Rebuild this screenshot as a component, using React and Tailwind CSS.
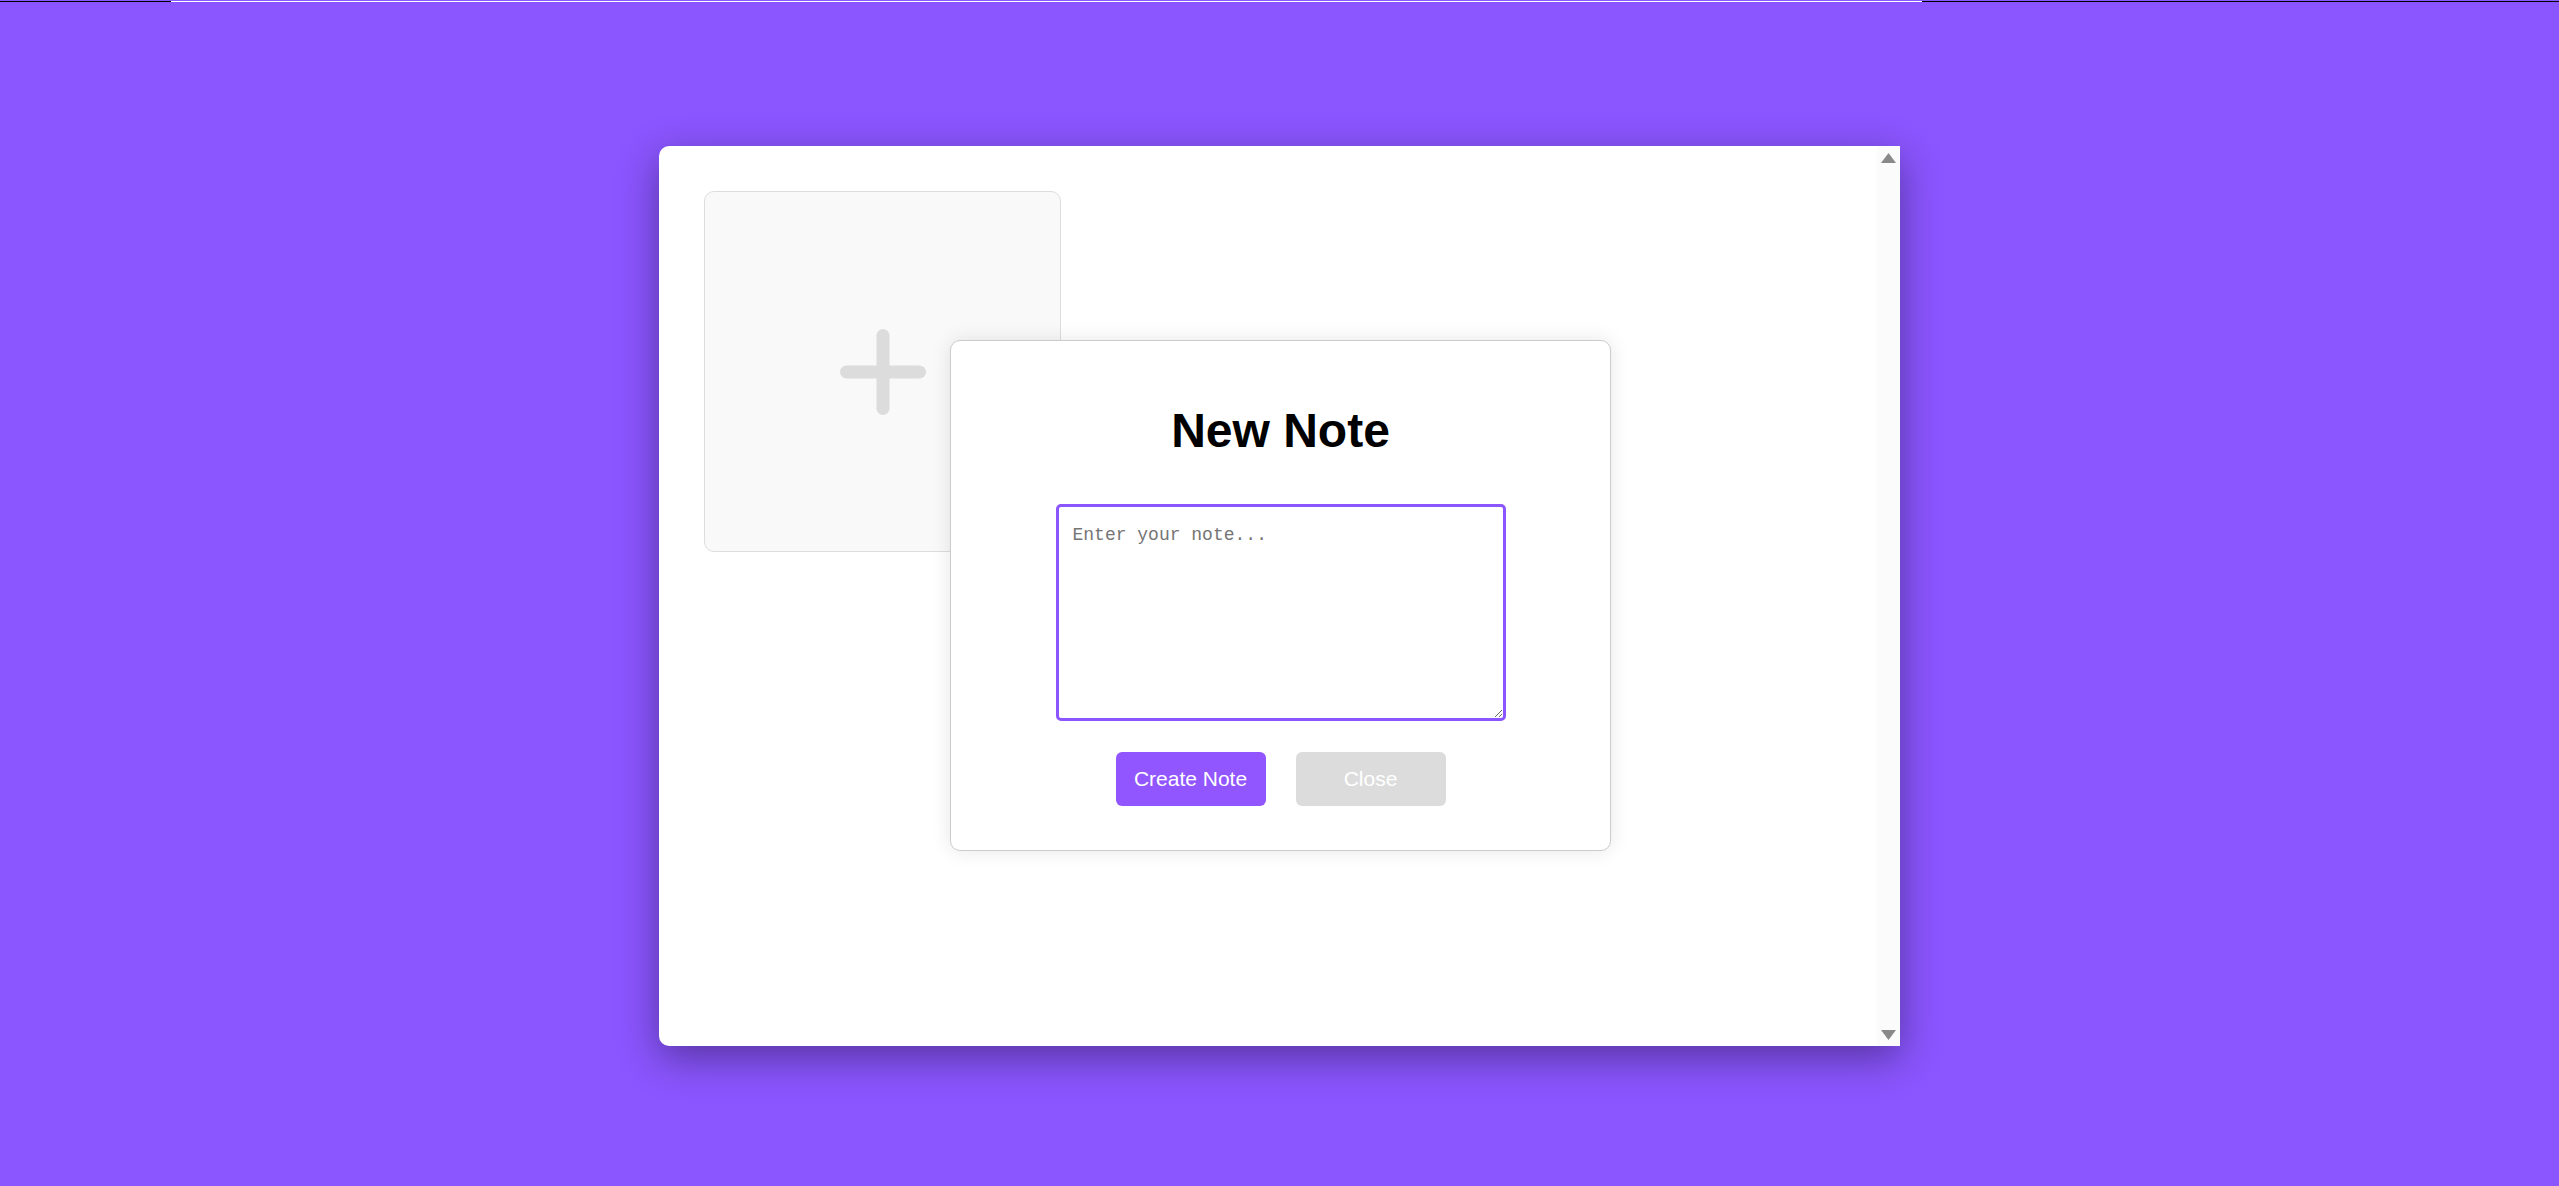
import React from "react";

// Notes board: one "add" tile, with the New Note dialog open over it.

const Plus = () => (
  <svg width="86" height="86" viewBox="0 0 86 86" fill="none">
    <line x1="6.5" y1="43" x2="79.5" y2="43" stroke="#dcdcdc" strokeWidth="13" strokeLinecap="round" />
    <line x1="43" y1="6.5" x2="43" y2="79.5" stroke="#dcdcdc" strokeWidth="13" strokeLinecap="round" />
  </svg>
);

const Arrow = ({ down }) => (
  <svg width="15" height="10" viewBox="0 0 15 10" className="block">
    {down ? <path d="M0 0 H15 L7.5 10 Z" fill="#898989" /> : <path d="M7.5 0 L15 10 H0 Z" fill="#898989" />}
  </svg>
);

const NewNoteDialog = () => (
  <div className="absolute left-[291px] top-[194px] w-[661px] h-[511px] bg-white border border-[#cccccc] rounded-[10px] shadow-[0_0_20px_rgba(0,0,0,0.1)] flex flex-col items-center pt-[62px]">
    <h1 className="text-[48px] leading-[55px] font-bold text-black font-['Liberation_Sans',Arial,sans-serif]">
      New Note
    </h1>
    <textarea
      placeholder="Enter your note..."
      className="mt-[46px] w-[450px] h-[217px] border-[3px] border-[#8b55ff] rounded-[5px] px-[14px] py-[15px] text-[18px] font-['Liberation_Mono',monospace] text-black placeholder:text-[#757575] outline-none resize"
    />
    <div className="mt-[31px] flex gap-[30px] font-['Liberation_Sans',Arial,sans-serif]">
      <button className="w-[150px] h-[54px] rounded-[6px] bg-[#9156ff] text-white text-[21px]">
        Create Note
      </button>
      <button className="w-[150px] h-[54px] rounded-[6px] bg-[#dcdcdc] text-white text-[21px]">
        Close
      </button>
    </div>
  </div>
);

export default function App() {
  return (
    <div className="min-h-[1186px] bg-[#8b55ff] overflow-hidden">
      <div className="mt-px h-px flex">
        <div className="w-[171px] bg-black" />
        <div className="flex-1 bg-white" />
        <div className="w-[637px] bg-black" />
      </div>
      <div className="pt-[144px] flex justify-center">
        <div className="relative w-[1241px] h-[900px] bg-white rounded-l-[10px] shadow-[0_12px_40px_rgba(0,0,0,0.38)] flex">
          <div className="flex-1 p-[45px]">
            <div className="w-[357px] h-[361px] bg-[#f9f9f9] border border-[#dddddd] rounded-[10px] flex items-center justify-center">
              <Plus />
            </div>
          </div>
          <div className="w-[23px] bg-[#fbfbfb] flex flex-col items-center justify-between pt-[7px] pb-[6px]">
            <Arrow />
            <Arrow down />
          </div>
          <NewNoteDialog />
        </div>
      </div>
    </div>
  );
}
